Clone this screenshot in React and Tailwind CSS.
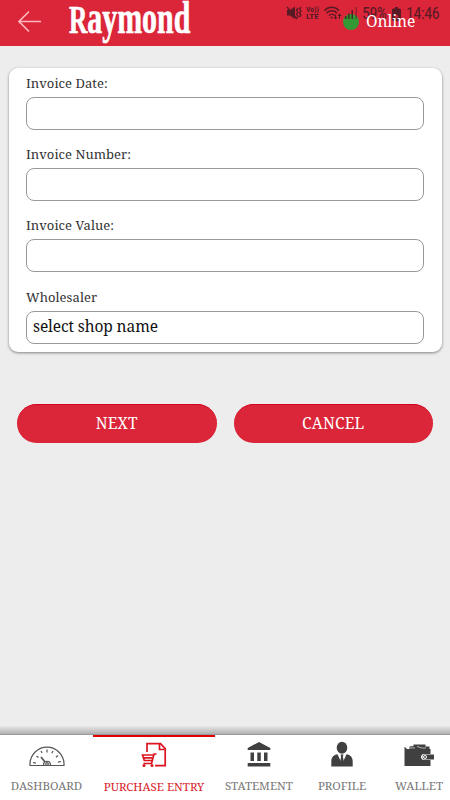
import clsx from "clsx";

const fields = [
  { label: "Invoice Date:" },
  { label: "Invoice Number:" },
  { label: "Invoice Value:" },
  { label: "Wholesaler", value: "select shop name" },
];

function DashboardIcon() {
  return (
    <svg width="38" height="28" viewBox="0 0 38 28" fill="none" stroke="#555" strokeWidth="1.2">
      <path d="M2 24.500V23C2 14 9.500 6.200 19 6.200S36 14 36 23v1.500z" />
      <path d="M5 21.500l3 .6M8.500 15l2 1.500M13 10l1 2M19 8.500v3M25 10l-1.200 2.300M30 14.500l-2 1.800M33 20.500l-3 .7" />
      <path d="M17 21l-4-5" strokeWidth="1.800" />
      <path d="M15.500 24c0-5 7-5 7 0" />
      <circle cx="19" cy="23" r="1.300" />
    </svg>
  );
}

function PurchaseIcon() {
  return (
    <svg width="26" height="28" viewBox="0 0 26 28" fill="none" stroke="#dc1420" strokeWidth="1.700">
      <path d="M6 11V2.700h13.500l4.700 5V24.700H14" />
      <path d="M18.500 3v5.500h5" />
      <path d="M15.500 13h-2.500l-2.500 9.500H2.500" />
      <path d="M12 14H1.500l1.800 5.500h8M2.800 16.800h8.500" />
      <circle cx="3" cy="24.500" r="1.500" fill="#dc1420" stroke="none" />
      <circle cx="11" cy="24.500" r="1.500" fill="#dc1420" stroke="none" />
    </svg>
  );
}

function StatementIcon() {
  return (
    <svg width="24" height="28" viewBox="0 0 24 28" fill="#404040">
      <path d="M12 1L23.300 7v2H.7V7z" />
      <path d="M3.500 11.500H7V20H3.500zM10.300 11.500h3.500V20h-3.500zM17 11.500h3.500V20H17zM.7 22h22.600v3.500H.7z" />
    </svg>
  );
}

function ProfileIcon() {
  return (
    <svg width="24" height="28" viewBox="0 0 24 28" fill="#404040">
      <ellipse cx="12" cy="6.700" rx="5.300" ry="6" />
      <path d="M1.300 25.500v-5c0-4.500 2.300-6.500 6.200-7.200L12 23l4.500-9.700c3.900.7 6.200 2.700 6.200 7.200v5z" />
      <path d="M10.500 13.500h3l-.6 2.300 1 5L12 24.500l-1.900-3.700 1-5z" />
    </svg>
  );
}

function WalletIcon() {
  return (
    <svg width="32" height="28" viewBox="0 0 32 28" fill="#404040">
      <path d="M6.500 8V5.500l4-.5V3.500h12v2h4V8z" />
      <path d="M1.500 5.500L4 8h23.500v5H21c-4 0-4 6 0 6h6.500v6h-26z" />
      <path d="M7 7.200l3-.5 2 .5M14 5.500l5 1.500h4" fill="none" stroke="#fff" strokeWidth=".6" />
      <path d="M21.500 13.500h9.500V18.500h-9.500c-2.600 0-2.600-5 0-5z" />
      <circle cx="22" cy="16" r="1.500" fill="none" stroke="#fff" />
    </svg>
  );
}

const tabs = [
  { label: "DASHBOARD", Icon: DashboardIcon, width: "w-[93px]" },
  { label: "PURCHASE ENTRY", Icon: PurchaseIcon, width: "w-[122px]", active: true },
  { label: "STATEMENT", Icon: StatementIcon, width: "w-[88px]" },
  { label: "PROFILE", Icon: ProfileIcon, width: "w-[78px]" },
  { label: "WALLET", Icon: WalletIcon, width: "w-[76px]" },
];

function StatusBar() {
  return (
    <div className="absolute left-[286px] top-[6px] flex h-4 items-center text-[#38181f] opacity-80">
      <svg width="72" height="16" viewBox="0 0 72 16" fill="currentColor">
        {/* muted speaker and vibration */}
        <path d="M1 4h3l5-3.500v12.500L4 9.500H1z" />
        <path d="M1 1l10 12M12 2l-1.500 2 1.500 2-1.500 2 1.500 2-1 2M15 1L13.500 3 15 5l-1.500 2L15 9l-1.500 2" fill="none" stroke="currentColor" strokeWidth="1.300" />
        {/* volte */}
        <text x="20" y="5.800" fontSize="7" fontWeight="700" fontFamily="Roboto, sans-serif" textLength="13" lengthAdjust="spacingAndGlyphs">Vo))</text>
        <text x="20" y="13.300" fontSize="7.500" fontWeight="700" fontFamily="Roboto, sans-serif" textLength="12.500" lengthAdjust="spacingAndGlyphs">LTE</text>
        {/* wifi */}
        <path d="M38.500 4.500c4-4.300 10.500-4.300 14.500 0M40.500 7c3-3 7.500-3 10.500 0M43 9.500c1.500-1.500 4-1.500 5.500 0" fill="none" stroke="currentColor" strokeWidth="1.400" />
        <circle cx="45.500" cy="11.500" r="1" />
        <path d="M49 8.500v2.500h-1.500l2 2.500 2-2.500H50V8.500zM53 13v-3h-1.500l2-2.500 2 2.500H54v3z" />
        {/* signal */}
        <path d="M59 10h1.500v3H59zM62 7.500h1.500V13H62zM65.500 4H67v9h-1.500z" />
        <path d="M69.500 1H71v12h-1.500z" opacity=".5" />
      </svg>
      <span className="ml-[4px] w-[26px] whitespace-nowrap font-[Roboto,sans-serif] text-[16px] leading-4 tracking-[-0.5px]">59%</span>
      <svg className="ml-[4px]" width="9" height="14" viewBox="0 0 9 14" fill="currentColor">
        <path d="M3 0h3v1.500H3zM1 1.500h7l1 1V13l-1 1H1l-1-1V2.500z" />
        <path d="M4.500 7L7 10H5.500v2h-2v-2H2z" fill="#b1293b" />
      </svg>
      <span className="ml-[5px] whitespace-nowrap font-[Roboto,sans-serif] text-[16px] leading-4 tracking-[-0.400px]">14:46</span>
    </div>
  );
}

function Header() {
  return (
    <header className="relative flex h-[46px] shrink-0 bg-[#db2539]">
      <svg className="ml-[17px] mt-[10px]" width="26" height="24" viewBox="0 0 26 24" fill="none" stroke="#ffb9be" strokeWidth="1.700">
        <path d="M24 11.500H2M12 1.500l-10 10 10 10" />
      </svg>
      <div className="ml-[26px] h-[46px] w-[122px]">
        <div className="w-max origin-left scale-x-[0.65] whitespace-nowrap font-['Liberation_Serif',serif] text-[46px] leading-[36px] font-bold text-white [-webkit-text-stroke:0.7px_white]">
          <span className="text-[39px]">R</span>aymond
        </div>
      </div>
      <span className="absolute left-[343px] top-[14px] size-4 rounded-full bg-[#349934]" />
      <StatusBar />
      <span className="absolute left-[366px] top-[11px] text-[15.500px] leading-5 tracking-[-0.05px] text-white">Online</span>
    </header>
  );
}

export default function App() {
  return (
    <div className="flex h-[800px] w-[450px] flex-col overflow-hidden bg-[#ededed] font-['Noto_Serif','DejaVu_Serif_Condensed','DejaVu_Serif',serif] [font-stretch:condensed]">
      <Header />

      <main className="flex-1">
        <form className="ml-[9px] mt-[22px] h-[284px] w-[433px] rounded-[9px] bg-white px-[17px] pt-[7px] shadow-[0_1px_3px_rgba(0,0,0,0.45)]">
          {fields.map(({ label, value }) => (
            <div key={label} className="h-[71.2px]">
              <label className="block h-[22px] text-[13px] leading-[17px] tracking-[0.05px] text-[#333]">{label}</label>
              <div className="h-[33px] w-[398px] rounded-[8px] border border-[#999] px-[6px] text-[15.500px] leading-[28px] tracking-[-0.1px] text-[#111]">
                {value}
              </div>
            </div>
          ))}
        </form>

        <div className="ml-[17px] mt-[52px] flex gap-[17px]">
          {["NEXT", "CANCEL"].map((label) => (
            <button
              key={label}
              className="h-[39px] w-[199.500px] rounded-full border-t border-[#d5001c] bg-[#db2539] pb-[3px] text-[15.500px] leading-[34px] tracking-[0.2px] text-white"
            >
              {label}
            </button>
          ))}
        </div>
      </main>

      <div className="h-2 bg-linear-to-b from-[#e8e8e8] to-[#b0b0b0]" />
      <nav className="flex h-[66px] w-[457px] shrink-0 border-t border-[#999] bg-white">
        {tabs.map(({ label, Icon, width, active }) => (
          <div
            key={label}
            className={clsx(
              "flex shrink-0 flex-col items-center border-t-2 pt-[4px]",
              width,
              active ? "border-[#e00000] text-[#d91c2a]" : "border-transparent text-[#777]"
            )}
          >
            <Icon />
            <span className={clsx("whitespace-nowrap text-[11.500px] leading-4", active ? "mt-[10px]" : "mt-[9px]")}>
              {label}
            </span>
          </div>
        ))}
      </nav>
    </div>
  );
}
